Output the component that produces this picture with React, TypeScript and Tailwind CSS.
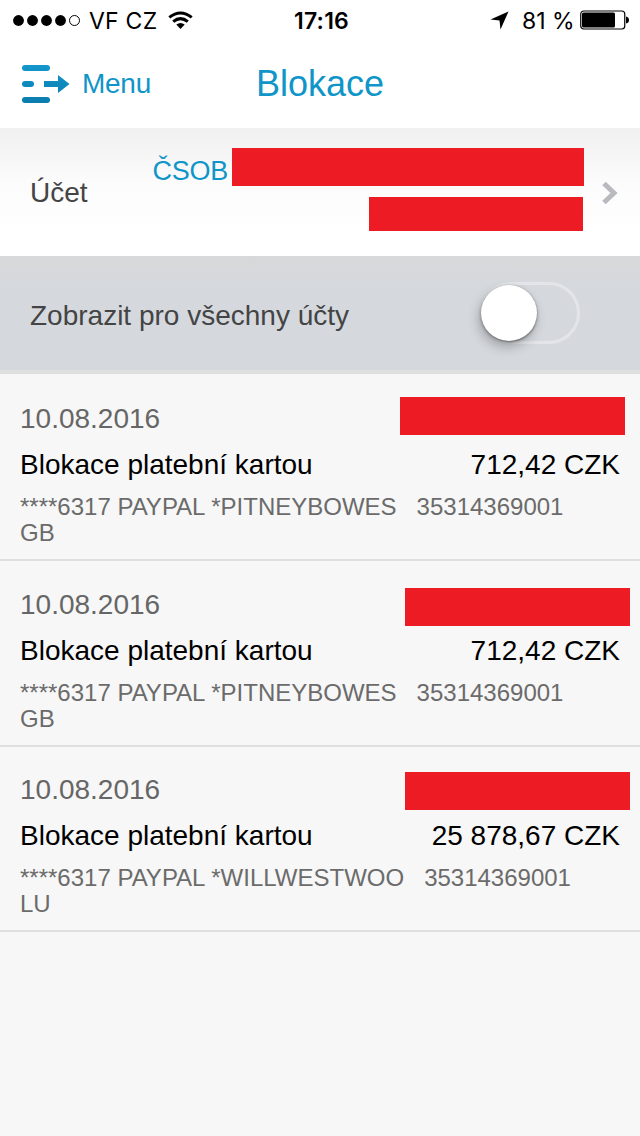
interface Transaction {
	date: string;
	title: string;
	amount: string;
	detail: string;
	country: string;
	// the hidden name sits a bit differently in each row
	redacted: string;
}

const transactions: Transaction[] = [
	{
		date: "10.08.2016",
		title: "Blokace platební kartou",
		amount: "712,42 CZK",
		detail: "****6317 PAYPAL *PITNEYBOWES   35314369001",
		country: "GB",
		redacted: "mt-[21px] mr-[15px]",
	},
	{
		date: "10.08.2016",
		title: "Blokace platební kartou",
		amount: "712,42 CZK",
		detail: "****6317 PAYPAL *PITNEYBOWES   35314369001",
		country: "GB",
		redacted: "mt-[26px] mr-2.5",
	},
	{
		date: "10.08.2016",
		title: "Blokace platební kartou",
		amount: "25 878,67 CZK",
		detail: "****6317 PAYPAL *WILLWESTWOO   35314369001",
		country: "LU",
		redacted: "mt-[25px] mr-2.5",
	},
];

const StatusBar: React.FC = () => (
	<div className="grid h-10 grid-cols-[1fr_auto_1fr] items-center pl-[13px] pr-[10px] font-[Inter,sans-serif] text-[23px] text-black">
		<div className="flex items-center">
			<svg width="68" height="12" viewBox="0 0 68 12">
				<circle cx="5.5" cy="6.5" r="5.4" />
				<circle cx="19.5" cy="6.5" r="5.4" />
				<circle cx="33.5" cy="6.5" r="5.4" />
				<circle cx="47.5" cy="6.5" r="5.4" />
				<circle cx="61.5" cy="6.5" r="5" fill="none" stroke="black" />
			</svg>
			<span className="mt-0.5 ml-2 w-[70px] whitespace-nowrap tracking-[0.01em]">VF CZ</span>
			<svg className="ml-[9px]" width="25" height="19" viewBox="0 0 25 19">
				<g fill="none" stroke="black" strokeWidth="3">
					<path d="M1.3 6.4 Q12.5 -2.4 23.7 6.4" />
					<path d="M5.2 10.7 Q12.5 4.6 19.8 10.7" />
				</g>
				<path d="M8.3 13.6 Q12.5 10.2 16.7 13.6 L12.5 18 Z" />
			</svg>
		</div>
		<span className="mt-0.5 font-semibold tracking-[0.01em]">17:16</span>
		<div className="flex items-center justify-end">
			<svg className="mt-px mr-px" width="19" height="19" viewBox="0 0 19 19">
				<path d="M18.5 0.5 L10.5 18.5 L9.5 9.5 L0.5 8.5 Z" />
			</svg>
			<span className="mt-0.5 ml-3 w-[54px] whitespace-nowrap">81 %</span>
			<svg className="ml-1" width="50" height="20" viewBox="0 0 50 20">
				<rect x="0.75" y="1" width="44" height="18" rx="3" fill="none" stroke="black" strokeWidth="1.2" />
				<rect x="2" y="2.5" width="33" height="15" rx="1.5" />
				<path d="M46 6.5 Q49 7 49 10 Q49 13 46 13.5 Z" />
			</svg>
		</div>
	</div>
);

const Header: React.FC = () => (
	<header className="grid h-[88px] grid-cols-[1fr_auto_1fr] items-center px-[22px] text-[#1095c8]">
		<button className="flex items-center gap-3 text-[28px]">
			<svg width="48" height="38" viewBox="0 0 48 38">
				<defs>
					<linearGradient id="menu" x1="0" y1="0" x2="0" y2="38" gradientUnits="userSpaceOnUse">
						<stop offset="0" stopColor="#1397cc" />
						<stop offset="1" stopColor="#0b7cae" />
					</linearGradient>
				</defs>
				<g fill="url(#menu)">
					<rect y="0" width="28" height="6" rx="3" />
					<rect y="16" width="12" height="6" rx="3" />
					<rect y="32" width="28" height="6" rx="3" />
					<path d="M22 16 H36 V10 L47.5 19 L36 28 V22 H22 Z" />
				</g>
			</svg>
			<span className="tracking-[-0.01em]">Menu</span>
		</button>
		<h1 className="text-[36px]">Blokace</h1>
	</header>
);

const AccountRow: React.FC = () => (
	<section className="flex h-32 items-center bg-linear-to-b from-[#f0f0f0] via-[#fbfbfb] via-40% to-white to-80% pl-[30px] pr-[22px]">
		<span className="mt-0.5 text-[28px]">Účet</span>
		<div className="ml-auto flex flex-col items-end gap-[11px] pb-[5px]">
			<div className="flex h-[38px] items-center">
				<span className="mt-2 mr-1 text-[27px] leading-none tracking-[-0.01em] text-[#1095c8]">ČSOB</span>
				<div className="h-[38px] w-[352px] bg-[#ed1c24]" />
			</div>
			<div className="mr-px h-[34px] w-[214px] bg-[#ed1c24]" />
		</div>
		<svg className="mt-0.5 ml-[18px]" width="16" height="24" viewBox="0 0 16 24">
			<path d="M2 2.5 L12 12 L2 21.5" fill="none" stroke="#b8babf" strokeWidth="5" />
		</svg>
	</section>
);

const AllAccounts: React.FC = () => (
	<section className="flex h-[118px] items-center justify-between border-b-4 border-[#dedfde] bg-linear-to-b from-[#d7d8d9] to-[#d5d9de] to-30% pl-[30px] pr-[60px]">
		<span className="mt-1.5 text-[28px]">Zobrazit pro všechny účty</span>
		<div
			role="switch"
			aria-checked="false"
			className="flex h-[62px] w-[100px] items-center rounded-full border-3 border-[#e3e5e8]"
		>
			<div className="-ml-0.5 size-14 rounded-full bg-white shadow-[-2px_6px_12px_rgba(0,0,0,0.25),0_1px_3px_rgba(0,0,0,0.5)]" />
		</div>
	</section>
);

const TransactionRow: React.FC<{ item: Transaction }> = ({ item }) => (
	<li className="h-[186px] border-b-2 border-[#dfdfdf] pt-px first:h-[187px] first:pt-0.5 last:h-[185px] last:pt-0">
		<div className="flex h-[68px] items-start justify-between">
			<span className="mt-[27px] ml-5 text-[28px] leading-8 text-[#666]">{item.date}</span>
			<div className={`h-[38px] w-[225px] bg-[#ed1c24] ${item.redacted}`} />
		</div>
		<div className="mt-px flex h-10 items-center justify-between px-5 text-[28px] text-black">
			<span>{item.title}</span>
			<span>{item.amount}</span>
		</div>
		<p className="mt-[9px] px-5 text-2xl leading-[26px] whitespace-pre-wrap text-[#6b6b6b]">
			{item.detail}
			<br />
			{item.country}
		</p>
	</li>
);

const App: React.FC = () => {
	return (
		<main className="h-[1136px] w-[640px] overflow-hidden bg-[#f7f7f7] font-['Liberation_Sans',Arial,sans-serif] text-[#444]">
			<div className="bg-white">
				<StatusBar />
				<Header />
			</div>
			<AccountRow />
			<AllAccounts />
			<ul>
				{transactions.map((item, i) => (
					<TransactionRow key={i} item={item} />
				))}
			</ul>
		</main>
	);
};

export default App;
